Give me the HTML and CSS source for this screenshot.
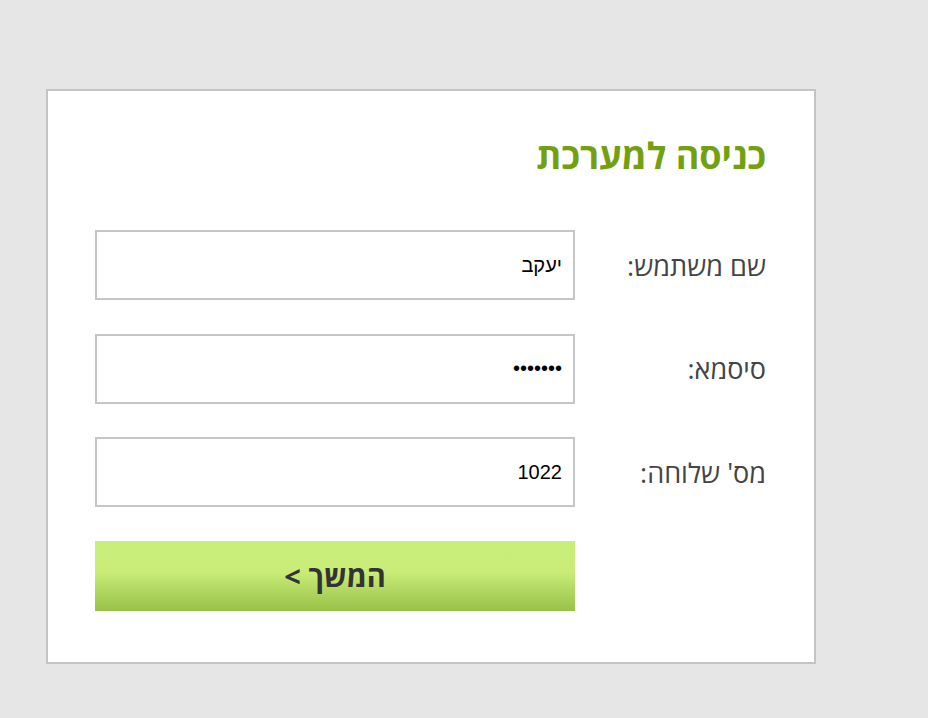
FILE: index.html
```html
<!DOCTYPE html>
<html lang="he" dir="rtl">
<head>
    <meta charset="UTF-8">
    <meta name="viewport" content="width=device-width, initial-scale=1.0">
    <title>כניסה למערכת</title>
    <link rel="stylesheet" href="styles.css">
</head>
<body>

    <div class="login-box">
        <h1>כניסה למערכת</h1>

        <form id="loginForm" class="login-form" action="#" method="POST">
            <label for="username">שם משתמש:</label>
            <input type="text" id="username" name="username" value="יעקב">

            <label for="password">סיסמא:</label>
            <input type="password" id="password" name="password" value="1234567">

            <label for="ext">מס' שלוחה:</label>
            <input type="text" id="ext" name="ext" value="1022">

            <span></span>
            <button type="submit">המשך &gt;</button>
        </form>
    </div>

</body>
</html>
```

FILE: styles.css
```css
/* Latar abu-abu terang, kotak login putih */
body {
    font-family: 'Open Sans', 'DejaVu Sans', sans-serif;
    background: #e6e6e6;
    margin: 0;
    padding: 89px 0 0 0;
}

.login-box {
    width: 770px;
    box-sizing: border-box;
    margin-right: 112px;
    background: #fff;
    border: 2px solid #c4c4c4;
    padding: 44px 48px 51px 47px;
}

h1 {
    color: #73a00f;
    font-size: 36px;
    font-weight: bold;
    margin: 0 0 53px 0;
    line-height: 42px;
}

.login-form {
    display: grid;
    grid-template-columns: 1fr 480px;
    grid-auto-rows: 70px;
    row-gap: 33.5px;
    align-items: center;
}

.login-form label {
    font-size: 27px;
    color: #444;
}

.login-form input {
    box-sizing: border-box;
    width: 480px;
    height: 70px;
    border: 2px solid #c6c6c6;
    padding: 0 11px;
    font-family: 'Liberation Sans', Arial, sans-serif;
    font-size: 20px;
    color: #000;
    background: #fff;
    outline: none;
}

.login-form button {
    width: 480px;
    height: 70px;
    border: none;
    background: linear-gradient(#cbee7b 0%, #c8ec77 45%, #99c047 100%);
    color: #333;
    font-family: 'Open Sans', 'DejaVu Sans', sans-serif;
    font-size: 29px;
    font-weight: bold;
    cursor: pointer;
}
```
